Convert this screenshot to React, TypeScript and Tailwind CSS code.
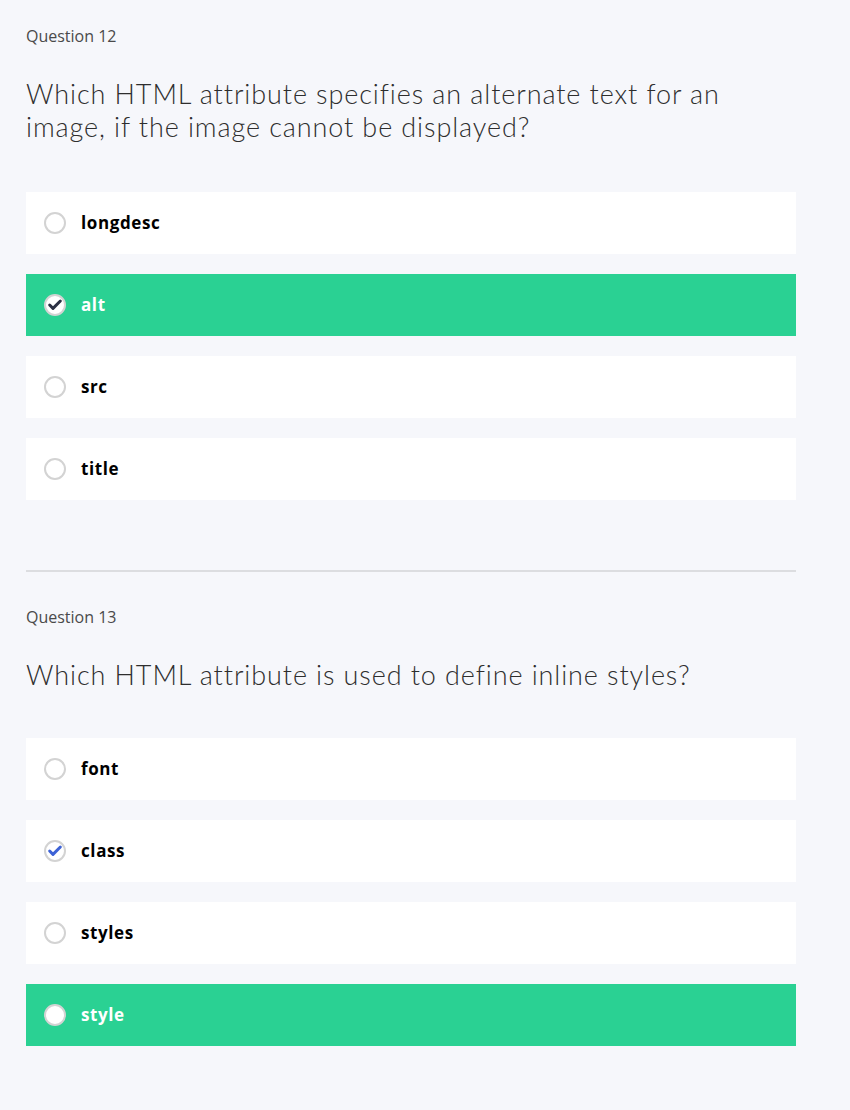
import { Check } from "lucide-react";

type Opt = { label: string; state?: "correct" | "checked" | "answer" | "none" };

const questions: { num: number; text: string; options: Opt[] }[] = [
  {
    num: 12,
    text: "Which HTML attribute specifies an alternate text for an image, if the image cannot be displayed?",
    options: [
      { label: "longdesc" },
      { label: "alt", state: "correct" },
      { label: "src" },
      { label: "title" },
    ],
  },
  {
    num: 13,
    text: "Which HTML attribute is used to define inline styles?",
    options: [
      { label: "font" },
      { label: "class", state: "checked" },
      { label: "styles" },
      { label: "style", state: "answer" },
    ],
  },
];

function Radio({ state }: { state?: Opt["state"] }) {
  if (state === "correct" || state === "checked") {
    return (
      <span className="w-[22px] h-[22px] rounded-full bg-white border-2 border-[#d3d3d3] flex items-center justify-center shrink-0">
        <Check
          size={16}
          strokeWidth={4.5}
          className={state === "correct" ? "text-[#2b3044]" : "text-[#3d62d6]"}
        />
      </span>
    );
  }
  return <span className="w-[22px] h-[22px] rounded-full bg-white border-2 border-[#d3d3d3] shrink-0" />;
}

function Question({ num, text, options, tall }: { num: number; text: string; options: Opt[]; tall?: boolean }) {
  return (
    <div>
      <p className="text-[16px] leading-6 text-[#4a4a4a] font-['Open_Sans',sans-serif]">Question {num}</p>
      <h2 className="mt-[29px] max-w-[730px] text-[27px] leading-[33px] tracking-[0.9px] font-light text-[#2e2e2e] font-['Lato',sans-serif]">
        {text}
      </h2>
      <div className={`${tall ? "mt-[49px]" : "mt-[47px]"} flex flex-col gap-5`}>
        {options.map(o => {
          const green = o.state === "correct" || o.state === "answer";
          return (
            <div
              key={o.label}
              className={`h-[62px] flex items-center gap-[15px] pl-[18px] ${green ? "bg-[#2ad193] text-white" : "bg-white text-black"}`}
            >
              <Radio state={o.state} />
              <span className="text-[17px] font-bold tracking-[0.6px] font-['Open_Sans',sans-serif]">{o.label}</span>
            </div>
          );
        })}
      </div>
    </div>
  );
}

export default function App() {
  return (
    <div className="min-h-[1110px] bg-[#f6f7fb] pl-[26px] pt-6 pb-16">
      <div className="w-[770px]">
        <Question {...questions[0]} tall />
        <div className="mt-[70px] mb-[33px] h-[2px] bg-[#dcdde0]" />
        <Question {...questions[1]} />
      </div>
    </div>
  );
}
